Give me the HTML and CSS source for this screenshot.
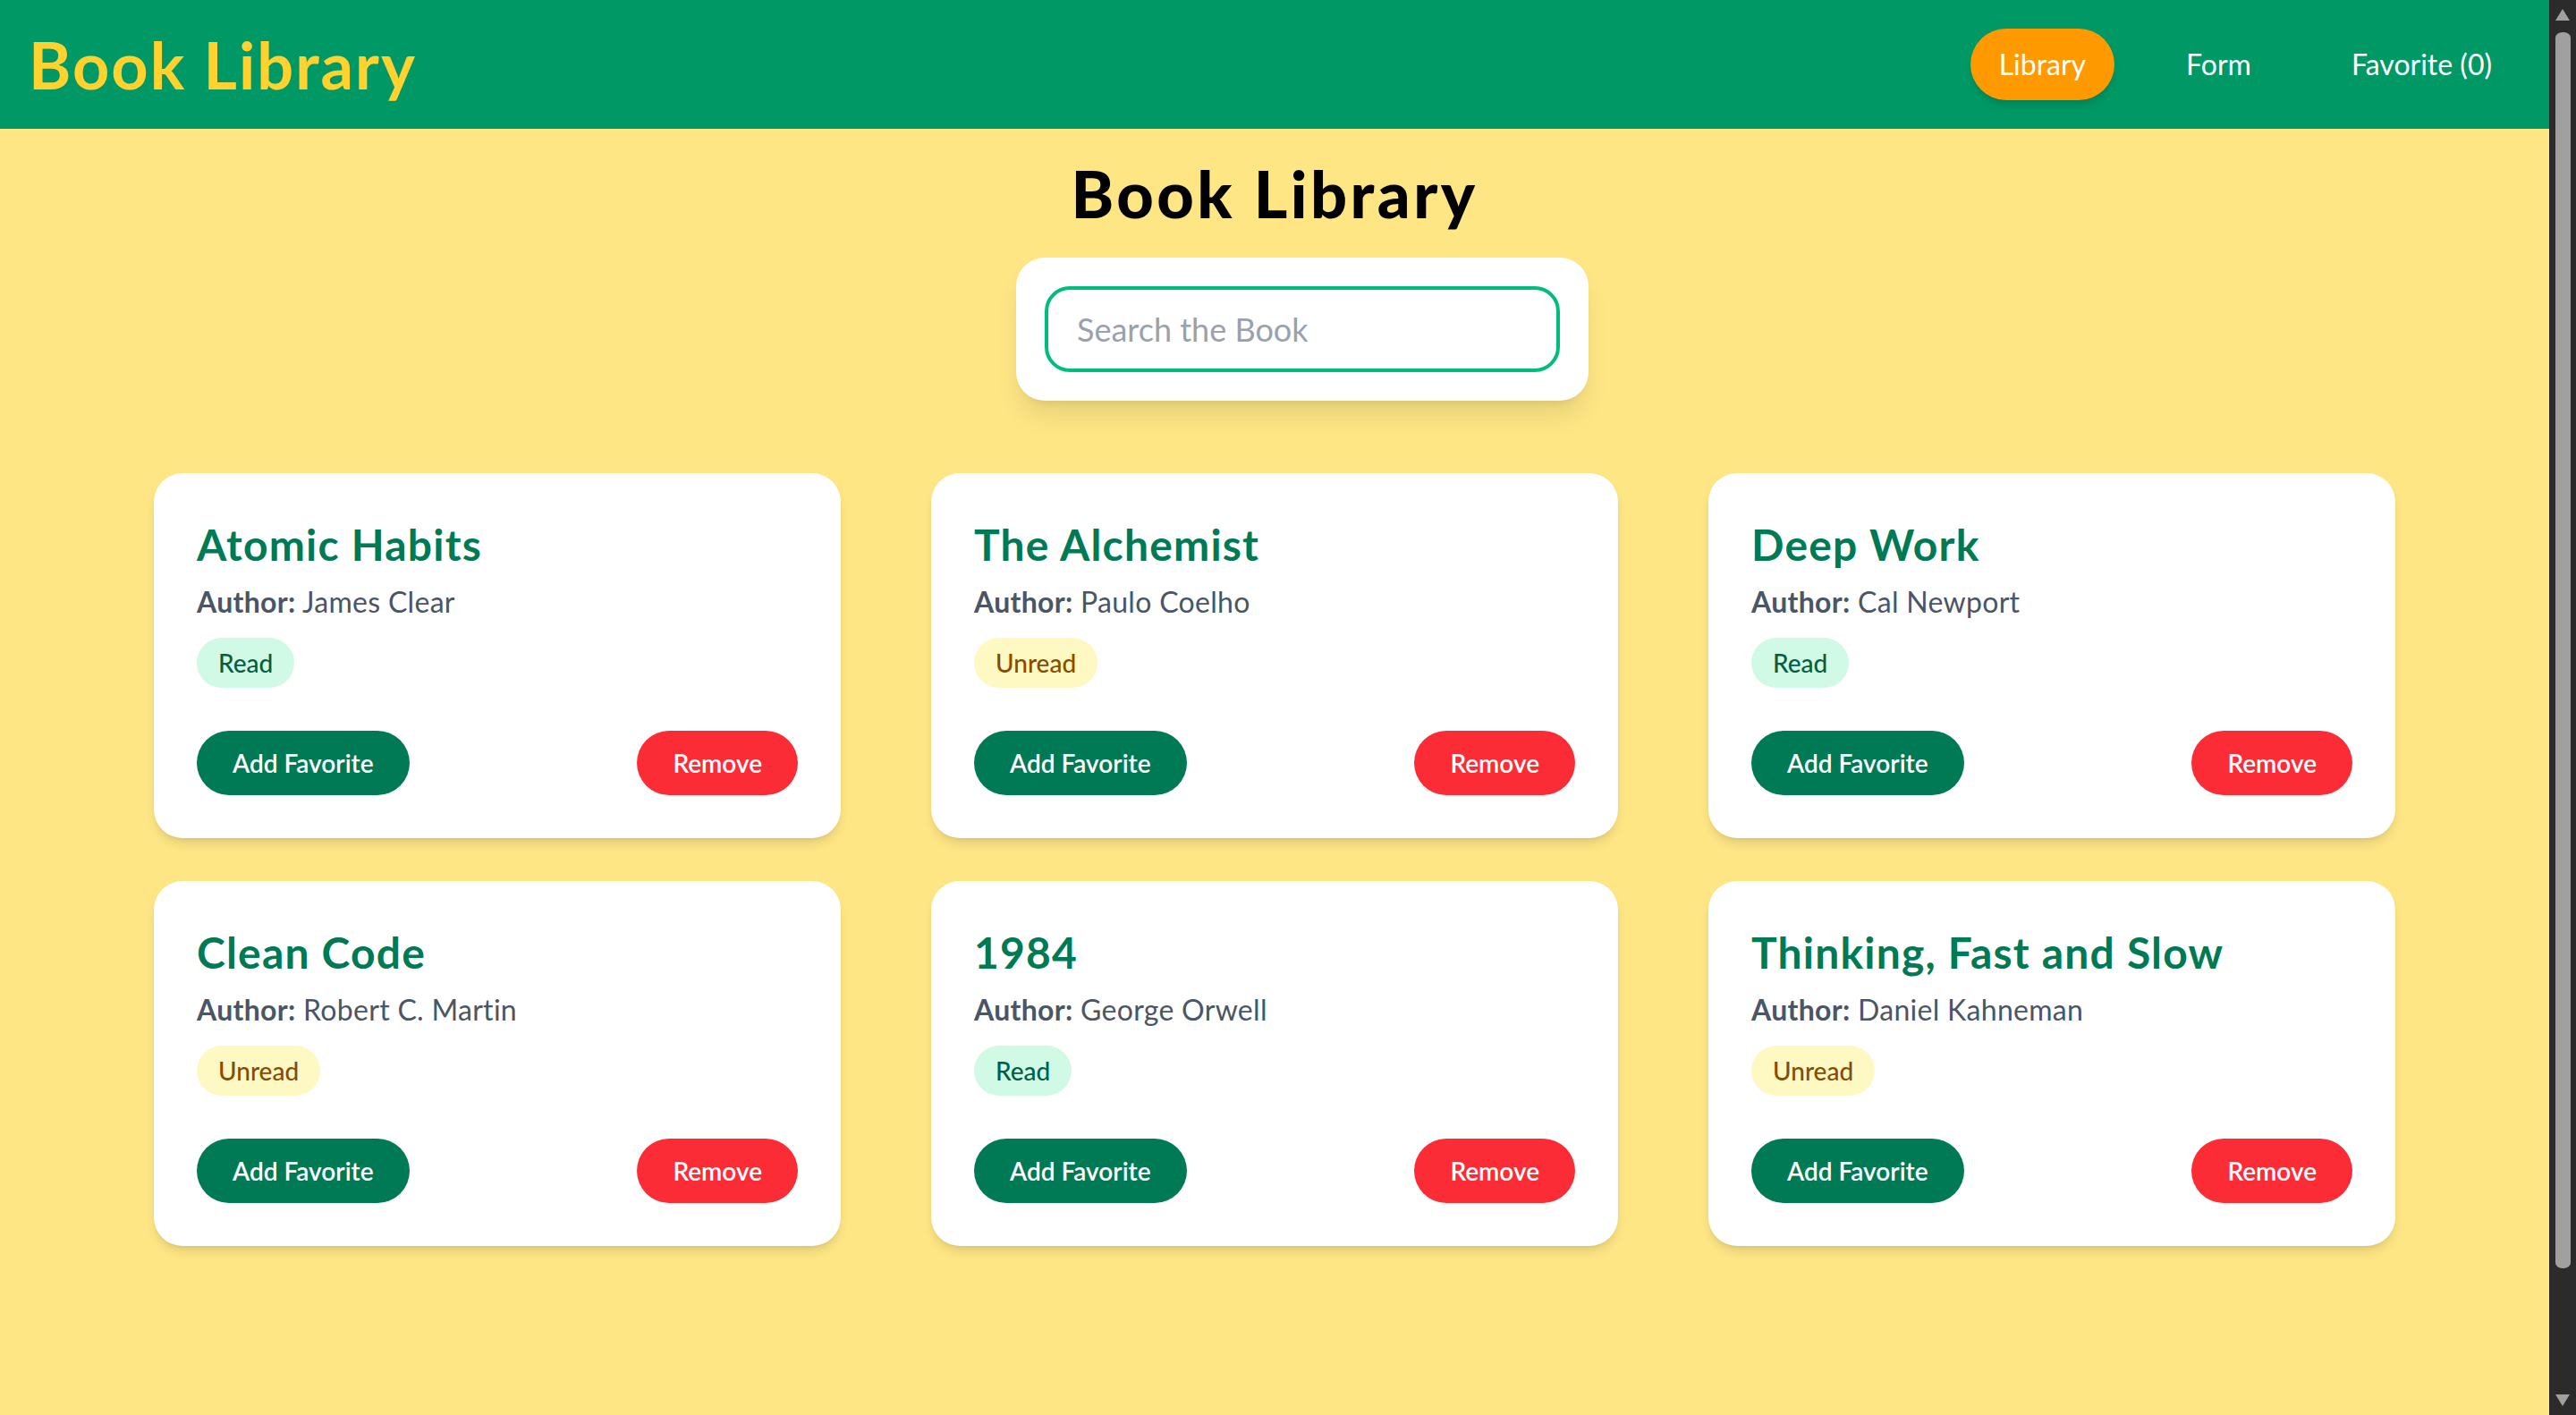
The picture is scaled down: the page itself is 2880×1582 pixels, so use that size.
FILE: index.html
```html
<!DOCTYPE html>
<html lang="en">
<head>
<meta charset="utf-8">
<title>Book Library</title>
<link rel="stylesheet" href="styles.css">
</head>
<body>
<header class="topbar">
  <div class="brand">Book Library</div>
  <nav class="nav">
    <a class="nav-item active">Library</a>
    <a class="nav-item">Form</a>
    <a class="nav-item">Favorite (0)</a>
  </nav>
</header>
<main class="main">
  <h1 class="page-title">Book Library</h1>
  <div class="search-wrap">
    <div class="search-box">
      <input class="search-input" type="text" placeholder="Search the Book">
    </div>
  </div>
  <section class="grid">
    <article class="card">
      <h2 class="card-title">Atomic Habits</h2>
      <p class="author"><strong>Author:</strong> James Clear</p>
      <span class="badge read">Read</span>
      <div class="actions"><button class="btn fav">Add Favorite</button><button class="btn remove">Remove</button></div>
    </article>
    <article class="card">
      <h2 class="card-title">The Alchemist</h2>
      <p class="author"><strong>Author:</strong> Paulo Coelho</p>
      <span class="badge unread">Unread</span>
      <div class="actions"><button class="btn fav">Add Favorite</button><button class="btn remove">Remove</button></div>
    </article>
    <article class="card">
      <h2 class="card-title">Deep Work</h2>
      <p class="author"><strong>Author:</strong> Cal Newport</p>
      <span class="badge read">Read</span>
      <div class="actions"><button class="btn fav">Add Favorite</button><button class="btn remove">Remove</button></div>
    </article>
    <article class="card">
      <h2 class="card-title">Clean Code</h2>
      <p class="author"><strong>Author:</strong> Robert C. Martin</p>
      <span class="badge unread">Unread</span>
      <div class="actions"><button class="btn fav">Add Favorite</button><button class="btn remove">Remove</button></div>
    </article>
    <article class="card">
      <h2 class="card-title">1984</h2>
      <p class="author"><strong>Author:</strong> George Orwell</p>
      <span class="badge read">Read</span>
      <div class="actions"><button class="btn fav">Add Favorite</button><button class="btn remove">Remove</button></div>
    </article>
    <article class="card">
      <h2 class="card-title">Thinking, Fast and Slow</h2>
      <p class="author"><strong>Author:</strong> Daniel Kahneman</p>
      <span class="badge unread">Unread</span>
      <div class="actions"><button class="btn fav">Add Favorite</button><button class="btn remove">Remove</button></div>
    </article>
  </section>
</main>
<div class="scrollbar" aria-hidden="true">
  <span class="sb-up"></span>
  <span class="sb-thumb"></span>
  <span class="sb-down"></span>
</div>
</body>
</html>
```
FILE: styles.css
```css
* {
  box-sizing: border-box;
}
body {
  margin: 0;
  padding-right: 30px;
  min-height: 100vh;
  background: #fee685;
  font-family: "Lato", "Open Sans", sans-serif;
}
.scrollbar {
  position: fixed;
  top: 0;
  right: 0;
  width: 30px;
  height: 100vh;
  background: #2b2b2b;
  display: flex;
  flex-direction: column;
  align-items: center;
}
.sb-up {
  margin-top: 10px;
  width: 0;
  height: 0;
  border-left: 8.5px solid transparent;
  border-right: 8.5px solid transparent;
  border-bottom: 13px solid #a0a0a0;
}
.sb-thumb {
  margin-top: 13px;
  width: 17px;
  height: 1382px;
  background: #a0a0a0;
  border-radius: 8px / 6px;
}
.sb-down {
  margin-top: 141px;
  width: 0;
  height: 0;
  border-left: 8.5px solid transparent;
  border-right: 8.5px solid transparent;
  border-top: 13px solid #a0a0a0;
}
.topbar {
  height: 144px;
  background: #009966;
  display: flex;
  align-items: center;
  justify-content: space-between;
  padding: 0 32px;
}
.brand {
  color: #ffd230;
  font-size: 72px;
  line-height: 80px;
  font-weight: 700;
  letter-spacing: 2px;
}
.nav {
  display: flex;
  gap: 48px;
}
.nav-item {
  color: #fff;
  font-size: 32px;
  line-height: 48px;
  padding: 16px 32px;
  border-radius: 999px;
  cursor: pointer;
}
.nav-item.active {
  background: #fe9a00;
  box-shadow: 0 8px 12px -2px rgba(0,0,0,0.12), 0 4px 6px -4px rgba(0,0,0,0.1);
}
.main {
  padding: 32px;
  text-align: center;
}
.page-title {
  margin: 0 0 32px;
  font-size: 72px;
  line-height: 80px;
  font-weight: 900;
  letter-spacing: 3.5px;
  color: #000;
}
.search-wrap {
  display: flex;
  justify-content: center;
  padding-left: 62px;
}
.search-box {
  width: 640px;
  padding: 32px;
  background: #fff;
  border-radius: 32px;
  box-shadow: 0 20px 30px -6px rgba(0,0,0,0.1), 0 8px 12px -8px rgba(0,0,0,0.1);
}
.search-input {
  display: block;
  width: 576px;
  height: 96px;
  border: 4px solid #00bc7d;
  border-radius: 28px;
  padding: 0 32px;
  font-family: inherit;
  font-size: 36px;
  color: #1e2939;
  outline: none;
  background: #fff;
}
.search-input::placeholder {
  color: #99a1af;
}
.grid {
  margin-top: 81px;
  display: grid;
  grid-template-columns: repeat(3, 768px);
  justify-content: center;
  column-gap: 101px;
  row-gap: 48px;
  text-align: left;
}
.card {
  background: #fff;
  border-radius: 32px;
  padding: 48px;
  box-shadow: 0 8px 12px -2px rgba(0,0,0,0.1), 0 4px 6px -4px rgba(0,0,0,0.1);
}
.card-title {
  margin: 0 0 8px;
  font-size: 48px;
  line-height: 64px;
  font-weight: 700;
  letter-spacing: 1.2px;
  color: #007a55;
}
.author {
  margin: 0;
  font-size: 32px;
  line-height: 48px;
  letter-spacing: 0.3px;
  color: #4a5565;
}
.author strong {
  font-weight: 700;
}
.badge {
  display: inline-block;
  margin-top: 16px;
  padding: 8px 24px;
  font-size: 28px;
  line-height: 40px;
  font-weight: 500;
  border-radius: 999px;
}
.badge.read {
  background: #d0fae5;
  color: #006045;
}
.badge.unread {
  background: #fef9c2;
  color: #894b00;
}
.actions {
  margin-top: 48px;
  display: flex;
  justify-content: space-between;
}
.btn {
  height: 72px;
  padding: 0 40px;
  border: none;
  border-radius: 999px;
  font-family: inherit;
  font-size: 28px;
  font-weight: 600;
  color: #fff;
  cursor: pointer;
}
.btn.fav {
  background: #007a55;
}
.btn.remove {
  background: #fb2c36;
}
```
